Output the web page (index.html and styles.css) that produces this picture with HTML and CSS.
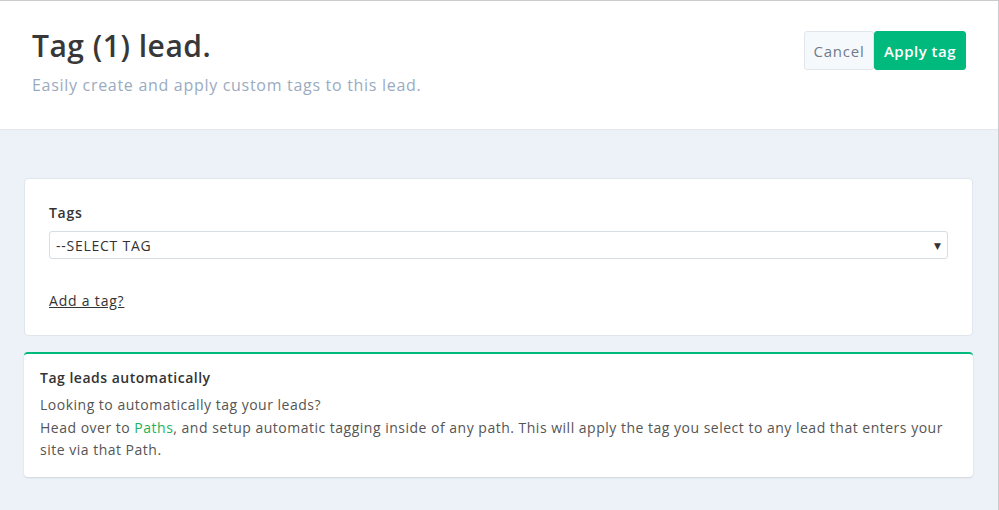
FILE: index.html
```html
<!DOCTYPE html>
<html>
<head>
<meta charset="utf-8">
<link rel="stylesheet" href="styles.css">
</head>
<body>
<div class="frame">
  <header class="header">
    <div class="header-text">
      <h1 class="title">Tag (1) lead.</h1>
      <p class="subtitle">Easily create and apply custom tags to this lead.</p>
    </div>
    <div class="actions">
      <button class="btn btn-cancel">Cancel</button>
      <button class="btn btn-apply">Apply tag</button>
    </div>
  </header>
  <main class="content">
    <section class="card">
      <label class="label">Tags</label>
      <div class="select">
        <span class="select-text">--SELECT TAG</span>
        <span class="select-arrow">&#9660;</span>
      </div>
      <a class="add-link" href="#">Add a tag?</a>
    </section>
    <section class="card-auto">
      <h2 class="auto-title">Tag leads automatically</h2>
      <p class="auto-text">Looking to automatically tag your leads?<br>Head over to <a class="green-link" href="#">Paths</a>, and setup automatic tagging inside of any path. This will apply the tag you select to any lead that enters your site via that Path.</p>
    </section>
  </main>
</div>
</body>
</html>
```
FILE: styles.css
```css
html, body {
  margin: 0;
  padding: 0;
  height: 100%;
}
body {
  font-family: "Open Sans", "DejaVu Sans", sans-serif;
  color: #333;
  background: #edf1f8;
}
.frame {
  min-height: 510px;
  box-sizing: border-box;
  border-top: 1px solid #c9cccf;
  border-right: 1px solid #c9cccf;
  background: #edf1f8;
}
.header {
  background: #fff;
  height: 128px;
  border-bottom: 1px solid #e3e6ea;
  display: flex;
  justify-content: space-between;
  align-items: flex-start;
  padding: 0 32px;
}
.title {
  margin: 25px 0 0 0;
  font-size: 30px;
  font-weight: 600;
  color: #383838;
  line-height: 40px;
  letter-spacing: 0.5px;
}
.subtitle {
  margin: 8px 0 0 0;
  font-size: 16px;
  color: #9aabbf;
  letter-spacing: 0.7px;
}
.actions {
  display: flex;
  margin-top: 30px;
}
.btn {
  font-family: inherit;
  font-size: 15px;
  height: 39px;
  border-radius: 3px;
  padding: 0;
  cursor: pointer;
}
.btn-cancel {
  background: #f6f9fc;
  border: 1px solid #e1e6ec;
  color: #6f7c8c;
  width: 70px;
  letter-spacing: 0.8px;
}
.btn-apply {
  background: #00b97c;
  border: 1px solid #00b97c;
  color: #fff;
  font-weight: 600;
  width: 92px;
  letter-spacing: 0.5px;
}
.content {
  padding: 48px 25px 0 24px;
  display: flex;
  flex-direction: column;
  gap: 16px;
}
.card {
  background: #fff;
  border: 1px solid #e1e5ec;
  border-radius: 4px;
  padding: 24px 24px 24px 24px;
  display: flex;
  flex-direction: column;
}
.label {
  font-size: 14px;
  font-weight: 600;
  color: #333;
  line-height: 20px;
  letter-spacing: 0.7px;
}
.select {
  margin-top: 8px;
  height: 26px;
  border: 1px solid #d7dde5;
  border-radius: 3px;
  display: flex;
  align-items: center;
  justify-content: space-between;
  padding: 0 6px;
}
.select-text {
  font-size: 14px;
  color: #333;
  letter-spacing: 0.75px;
}
.select-arrow {
  font-size: 9px;
  color: #333;
}
.add-link {
  margin-top: 32px;
  font-size: 14px;
  color: #333;
  text-decoration: underline;
  align-self: flex-start;
  line-height: 20px;
  letter-spacing: 0.8px;
}
.card-auto {
  background: #fff;
  border-top: 2px solid #00b97c;
  border-radius: 4px;
  box-shadow: 0 1px 2px rgba(0, 0, 0, 0.12);
  padding: 13px 16px 15px 16px;
}
.auto-title {
  margin: 0;
  font-size: 14px;
  font-weight: 600;
  line-height: 22px;
  color: #333;
  letter-spacing: 0.5px;
}
.auto-text {
  margin: 5px 0 0 0;
  font-size: 14px;
  line-height: 22.5px;
  color: #555;
  letter-spacing: 0.5px;
}
.green-link {
  color: #1fb25a;
  text-decoration: none;
}
```
